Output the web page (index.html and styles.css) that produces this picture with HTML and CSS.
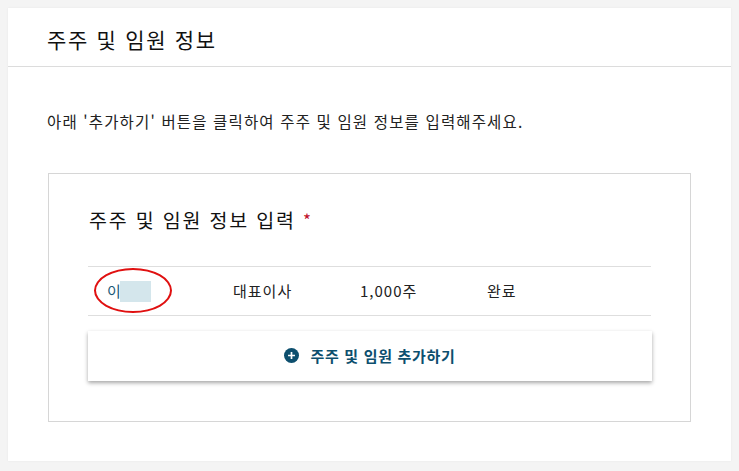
FILE: index.html
```html
<!DOCTYPE html>
<html lang="ko">
<head>
<meta charset="utf-8">
<link rel="stylesheet" href="styles.css">
</head>
<body>
<div class="panel">
  <div class="panel-header"><h1 class="panel-title">주주 및 임원 정보</h1></div>
  <div class="panel-body">
    <p class="desc">아래 '추가하기' 버튼을 클릭하여 주주 및 임원 정보를 입력해주세요.</p>
    <div class="card">
      <h2 class="card-title">주주 및 임원 정보 입력 <span class="req">*</span></h2>
      <div class="table">
        <div class="row">
          <div class="cell name">이<span class="blur"></span><span class="circle"></span></div>
          <div class="cell">대표이사</div>
          <div class="cell">1,000주</div>
          <div class="cell">완료</div>
        </div>
      </div>
      <button class="add-btn" type="button">
        <svg class="add-icon" width="15" height="15" viewBox="0 0 16 16"><circle cx="8" cy="8" r="8" fill="#0d4f6e"/><path d="M8 4.3v7.4M4.3 8h7.4" stroke="#fff" stroke-width="1.8"/></svg>
        <span>주주 및 임원 추가하기</span>
      </button>
    </div>
  </div>
</div>
</body>
</html>
```
FILE: styles.css
```css
html, body { margin: 0; padding: 0; }
body {
  background: #f4f4f4;
  padding: 8px 8px 10px 8px;
  font-family: "Noto Sans CJK KR", "Noto Sans", sans-serif;
  color: #222;
}
.panel {
  background: #fff;
  height: 453px;
  box-shadow: 0 0 2px rgba(0,0,0,0.06);
}
.panel-header {
  height: 58px;
  border-bottom: 1px solid #dcdcdc;
  padding-left: 39px;
  display: flex;
  align-items: center;
}
.panel-title {
  margin: 0;
  font-size: 21px;
  font-weight: 400;
  line-height: 28px;
  letter-spacing: 1.7px;
  color: #111;
  position: relative;
  top: 2px;
}
.panel-body {
  padding: 0 40px 0 40px;
}
.desc {
  margin: 42px 0 0 -1px;
  font-size: 15.5px;
  line-height: 24px;
  letter-spacing: 1.15px;
  color: #222;
}
.card {
  margin-top: 40px;
  border: 1px solid #d6d6d6;
  padding: 32px 39px 40px 39px;
}
.card-title {
  margin: 0 0 0 1px;
  font-size: 19.5px;
  font-weight: 400;
  line-height: 28px;
  letter-spacing: 1.8px;
  color: #111;
}
.req { color: #c0102a; font-size: 17px; vertical-align: top; letter-spacing: 0; }
.table {
  margin-top: 32px;
  border-top: 1px solid #dedede;
  border-bottom: 1px solid #dedede;
}
.row {
  height: 48px;
  display: grid;
  grid-template-columns: 126px 127px 127px 1fr;
  align-items: center;
  padding-left: 19px;
  font-size: 15px;
  letter-spacing: 1px;
  color: #222;
}
.cell { line-height: 20px; }
.name {
  position: relative;
  color: #1b5a78;
  display: flex;
  align-items: center;
}
.blur {
  display: inline-block;
  width: 31px;
  height: 21px;
  background: #d4e6ec;
  margin-left: -2px;
}
.circle {
  position: absolute;
  left: -13px;
  top: -13px;
  width: 74px;
  height: 41px;
  border: 2.5px solid #e01010;
  border-radius: 50%;
}
.add-btn {
  margin-top: 15px;
  width: 564px;
  height: 50px;
  border: none;
  background: #fff;
  box-shadow: 0 2px 4px rgba(0,0,0,0.35);
  display: flex;
  align-items: center;
  justify-content: center;
  gap: 11px;
  font-family: inherit;
  font-size: 15px;
  font-weight: 700;
  letter-spacing: 0.7px;
  color: #0d4f6e;
  padding: 0 0 2px 0;
}
.add-icon { display: block; }
```
